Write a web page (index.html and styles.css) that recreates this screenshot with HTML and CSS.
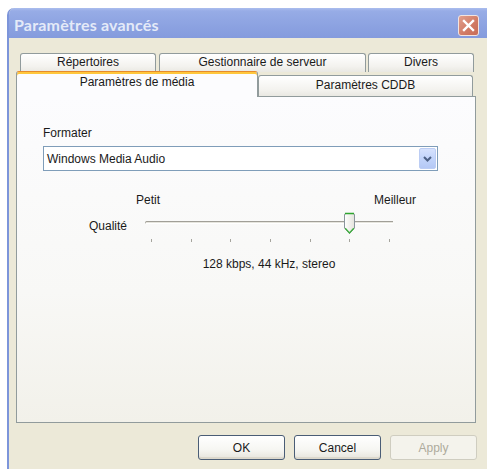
FILE: index.html
```html
<!DOCTYPE html>
<html lang="fr">
<head>
<meta charset="utf-8">
<title>Paramètres avancés</title>
<link rel="stylesheet" href="styles.css">
</head>
<body>
<div class="window">
  <div class="titlebar">
    <span class="title">Paramètres avancés</span>
    <span class="close">
      <svg width="13" height="13" viewBox="0 0 13 13"><path d="M2 2 L11 11 M11 2 L2 11" stroke="#fff" stroke-width="2.4" stroke-linecap="square"/></svg>
    </span>
  </div>
  <div class="body">
    <div class="tabs-back">
      <div class="tab back t1">Répertoires</div>
      <div class="tab back t2">Gestionnaire de serveur</div>
      <div class="tab back t3">Divers</div>
    </div>
    <div class="tabs-front">
      <div class="tab active">Paramètres de média</div>
      <div class="tab front">Paramètres CDDB</div>
    </div>
    <div class="panel">
      <div class="label">Formater</div>
      <div class="select">
        <span class="select-text">Windows Media Audio</span>
        <span class="select-btn">
          <svg width="9" height="6" viewBox="0 0 9 6"><path d="M1 1 L4.5 4.5 L8 1" fill="none" stroke="#4d6185" stroke-width="2"/></svg>
        </span>
      </div>
      <div class="scale-labels">
        <span>Petit</span>
        <span>Meilleur</span>
      </div>
      <div class="quality-row">
        <span class="quality-label">Qualité</span>
        <div class="slider">
          <div class="track"></div>
          <div class="ticks">
            <i></i><i></i><i></i><i></i><i></i><i></i><i></i>
          </div>
          <svg class="thumb" width="13" height="23" viewBox="0 0 13 23">
            <defs>
              <linearGradient id="tg" x1="0" y1="0" x2="1" y2="0">
                <stop offset="0" stop-color="#ffffff"/>
                <stop offset="1" stop-color="#e4e3dc"/>
              </linearGradient>
            </defs>
            <path d="M1.5 3 Q1.5 1.5 3 1.5 H10 Q11.5 1.5 11.5 3 V16 L6.5 21.5 L1.5 16 Z" fill="url(#tg)" stroke="#8a949c" stroke-width="1"/>
            <path d="M2 1.5 H11" stroke="#2fa52f" stroke-width="1.6"/>
            <path d="M2.2 16.3 L6.5 21 L10.8 16.3" fill="none" stroke="#3fae3f" stroke-width="1.3"/>
          </svg>
        </div>
      </div>
      <div class="info">128 kbps, 44 kHz, stereo</div>
    </div>
    <div class="buttons">
      <button class="btn">OK</button>
      <button class="btn">Cancel</button>
      <button class="btn disabled">Apply</button>
    </div>
  </div>
</div>
</body>
</html>
```

FILE: styles.css
```css
html, body {
  margin: 0;
  padding: 0;
  background: #ffffff;
  overflow: hidden;
  width: 487px;
  height: 471px;
}
body {
  font-family: "Liberation Sans", Arial, sans-serif;
  font-size: 12px;
  color: #1a1a1a;
}
.window {
  margin: 8px 0 0 7px;
  width: 478px;
  height: 461px;
  border-left: 2px solid #7d95da;
  border-radius: 7px 0 0 0;
  background: #ece9d8;
  display: flex;
  flex-direction: column;
  overflow: hidden;
}
.titlebar {
  height: 30px;
  flex: none;
  display: flex;
  justify-content: space-between;
  align-items: flex-start;
  padding: 0 8px 0 7px;
  margin-left: -2px;
  background: linear-gradient(#abbdee 0, #97ace6 3px, #8ea4e2 50%, #849bdd 100%);
}
.title {
  margin-top: 7px;
  line-height: 19px;
  font-family: Lato, "DejaVu Sans", sans-serif;
  font-weight: bold;
  font-size: 16px;
  letter-spacing: 0.2px;
  color: #e4eaf8;
}
.close {
  margin-top: 7px;
  width: 19px;
  height: 19px;
  border: 1px solid #f2e4e0;
  border-radius: 3px;
  background: linear-gradient(135deg, #e2a08e, #d07a64 60%, #c86c56);
  display: flex;
  align-items: center;
  justify-content: center;
}
.body {
  flex: 1;
  padding: 15px 0 0 7px;
  display: flex;
  flex-direction: column;
}
.tabs-back {
  display: flex;
  margin-left: 4px;
  gap: 2px;
  height: 18px;
}
.tab {
  box-sizing: border-box;
  text-align: center;
  border: 1px solid #919b9c;
  border-bottom: none;
  border-radius: 3px 3px 0 0;
  background: linear-gradient(#ffffff, #f3f2ee 70%, #e9e8e2);
  color: #1a1a1a;
}
.back {
  height: 19px;
  line-height: 17px;
}
.t1 { width: 136px; }
.t2 { width: 207px; margin-left: 1px; }
.t3 { width: 106px; }
.tabs-front {
  display: flex;
  align-items: flex-end;
  height: 25px;
  position: relative;
  z-index: 1;
}
.active {
  width: 242px;
  height: 26px;
  margin-bottom: -1px;
  border-top: 1px solid #e68b2c;
  box-shadow: inset 0 2px 0 #ffc73c;
  background: #fcfcfe;
  line-height: 21px;
}
.front {
  width: 215px;
  height: 21px;
  line-height: 19px;
}
.panel {
  box-sizing: border-box;
  width: 460px;
  height: 327px;
  border: 1px solid #919b9c;
  background: linear-gradient(#fcfcfe, #f8f8f6 60%, #f2f1ea);
  padding: 29px 0 0 26px;
}
.label {
  line-height: 14px;
}
.select {
  box-sizing: border-box;
  margin-top: 6px;
  width: 395px;
  height: 25px;
  border: 1px solid #7f9db9;
  background: #ffffff;
  display: flex;
  align-items: center;
  justify-content: space-between;
  padding: 0 1px 0 3px;
}
.select-btn {
  box-sizing: border-box;
  width: 17px;
  height: 21px;
  border: 1px solid #bccdf4;
  border-radius: 2px;
  background: linear-gradient(#d6e2fd, #c2d4fa 50%, #b4c8f5);
  display: flex;
  align-items: center;
  justify-content: center;
}
.scale-labels {
  margin: 22px 0 0 93px;
  width: 280px;
  display: flex;
  justify-content: space-between;
  line-height: 14px;
}
.quality-row {
  display: flex;
  margin: 4px 0 0 46px;
}
.quality-label {
  width: 56px;
  padding-top: 8px;
  line-height: 14px;
}
.slider {
  position: relative;
  width: 248px;
  height: 34px;
}
.track {
  box-sizing: border-box;
  margin-top: 10px;
  height: 3px;
  border-top: 1px solid #a19f98;
  border-left: 1px solid #b0aea6;
  border-bottom: 1px solid #ffffff;
  border-radius: 2px 0 0 2px;
  background: #e6e5de;
}
.ticks {
  margin-top: 15px;
  display: flex;
  justify-content: space-between;
  padding: 0 3px 0 6px;
}
.ticks i {
  display: block;
  width: 1px;
  height: 3px;
  background: #a6a59e;
}
.thumb {
  position: absolute;
  left: 198px;
  top: 1px;
}
.info {
  margin: 12px 0 0 102px;
  width: 248px;
  text-align: center;
  line-height: 14px;
}
.buttons {
  display: flex;
  justify-content: flex-end;
  gap: 9px;
  padding-right: 10px;
  margin-top: 12px;
}
.btn {
  box-sizing: border-box;
  width: 87px;
  height: 25px;
  border: 1px solid #4a5d76;
  border-radius: 3px;
  background: linear-gradient(#ffffff, #f6f6f2 60%, #e6e4dc);
  box-shadow: inset 0 -2px 0 #dcd8cc;
  font-family: "Liberation Sans", Arial, sans-serif;
  font-size: 12px;
  color: #1a1a1a;
  padding: 0;
}
.btn.disabled {
  border-color: #cfcdc0;
  background: #f4f3ec;
  box-shadow: none;
  color: #aeab9c;
}
```
